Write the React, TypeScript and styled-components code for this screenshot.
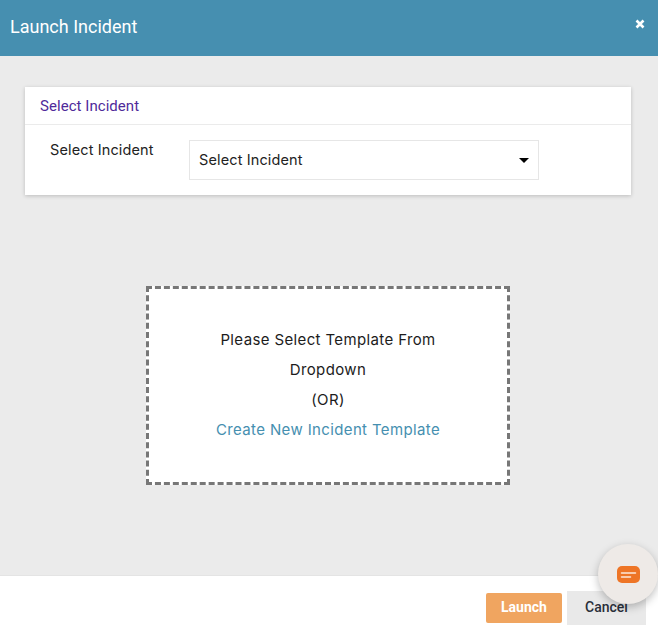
import React from "react";
import styled, { createGlobalStyle } from "styled-components";

const Global = createGlobalStyle`
  html, body { margin: 0; padding: 0; height: 100%; overflow: hidden; background: #fff; }
  #root { height: 100%; }
  * { box-sizing: border-box; }
`;

const Modal = styled.div`
  position: relative;
  width: 658px;
  height: 625px;
  display: flex;
  flex-direction: column;
  overflow: hidden;
  font-family: Inter, "Liberation Sans", sans-serif;
`;

const Header = styled.header`
  height: 56px;
  flex: none;
  background: #468fb0;
  display: flex;
  align-items: center;
  justify-content: space-between;
  padding: 0 13px 2px 10px;
`;

const Title = styled.h1`
  margin: 0;
  font: 400 18px/24px Roboto, sans-serif;
  color: #fff;
`;

const Close = styled.button`
  border: 0;
  padding: 0;
  background: none;
  display: flex;
  margin-top: -6px;
`;

const Body = styled.main`
  flex: 1;
  background: #ebebeb;
  padding: 31px 27px 0 25px;
  display: flex;
  flex-direction: column;
`;

const Card = styled.section`
  height: 108px;
  background: #fff;
  box-shadow: 0 1px 4px rgba(0, 0, 0, 0.2);
`;

const CardHead = styled.div`
  height: 38px;
  padding: 0 15px;
  display: flex;
  align-items: center;
  border-bottom: 1px solid #ebebeb;
  font: 400 15px/20px Roboto, sans-serif;
  letter-spacing: 0.05px;
  color: #4f2a9a;
`;

const Row = styled.div`
  display: flex;
  padding: 14px 0 0 25px;
`;

const Label = styled.label`
  width: 139px;
  font-size: 14.5px;
  line-height: 22px;
  letter-spacing: 0.13px;
  color: #222;
`;

const Select = styled.div`
  width: 350px;
  height: 40px;
  margin-top: 1px;
  border: 1px solid #e6e6e6;
  display: flex;
  align-items: center;
  justify-content: space-between;
  padding: 0 9px 1px;
  font-size: 14.5px;
  letter-spacing: 0.13px;
  color: #222;
`;

const Caret = styled.span`
  width: 0;
  height: 0;
  margin-top: 1px;
  border-left: 5px solid transparent;
  border-right: 5px solid transparent;
  border-top: 5px solid #000;
`;

const Drop = styled.div`
  width: 364px;
  height: 199px;
  margin: 91px 0 0 121px;
  padding-bottom: 1px;
  background: #fff;
  border: 3px dashed #777;
  display: flex;
  flex-direction: column;
  align-items: center;
  justify-content: center;
  font-size: 15px;
  line-height: 30px;
  letter-spacing: 0.37px;
  color: #1c1c1c;
  text-align: center;
`;

const CreateLink = styled.a`
  color: #468fb0;
  text-decoration: none;
`;

const Footer = styled.footer`
  height: 50px;
  flex: none;
  background: #fff;
  border-top: 1px solid #e4e4e4;
  display: flex;
  justify-content: flex-end;
  align-items: flex-end;
  gap: 5px;
  padding: 0 12px 0 0;
`;

const Launch = styled.button`
  width: 76px;
  height: 30px;
  margin-bottom: 2px;
  padding: 0 0 2px;
  border: 0;
  border-radius: 2px;
  background: #f0a560;
  color: #fff;
  font: 700 14px Roboto, sans-serif;
`;

const Cancel = styled.button`
  width: 79px;
  height: 34px;
  padding: 0 0 2px;
  border: 0;
  background: #e9e9e9;
  color: #2a2f3a;
  font: 500 14px Roboto, sans-serif;
`;

const Chat = styled.div`
  position: absolute;
  left: 598px;
  top: 544px;
  width: 60px;
  height: 60px;
  border-radius: 50%;
  background: #eeeae7;
  box-shadow: 0 3px 8px rgba(0, 0, 0, 0.25);
  display: flex;
  align-items: center;
  justify-content: center;
`;

const ChatIcon = styled.svg`
  display: block;
`;

export default function App() {
  return (
    <Modal>
      <Global />
      <Header>
        <Title>Launch Incident</Title>
        <Close aria-label="Close">
          <svg width="10" height="10" viewBox="0 0 10 10">
            <path d="M1.5 1.5l7 7M8.5 1.5l-7 7" stroke="#fff" strokeWidth="2.6" />
          </svg>
        </Close>
      </Header>
      <Body>
        <Card>
          <CardHead>Select Incident</CardHead>
          <Row>
            <Label>Select Incident</Label>
            <Select>
              Select Incident
              <Caret />
            </Select>
          </Row>
        </Card>
        <Drop>
          <div>Please Select Template From</div>
          <div>Dropdown</div>
          <div>(OR)</div>
          <CreateLink href="#">Create New Incident Template</CreateLink>
        </Drop>
      </Body>
      <Footer>
        <Launch>Launch</Launch>
        <Cancel>Cancel</Cancel>
      </Footer>
      <Chat>
        <ChatIcon width="23" height="17" viewBox="0 0 23 17">
          <rect width="23" height="17" rx="5" fill="#ee7526" />
          <path d="M4.5 7h14M4.5 11h9" stroke="#fde9da" strokeWidth="1.5" strokeLinecap="round" />
        </ChatIcon>
      </Chat>
    </Modal>
  );
}
